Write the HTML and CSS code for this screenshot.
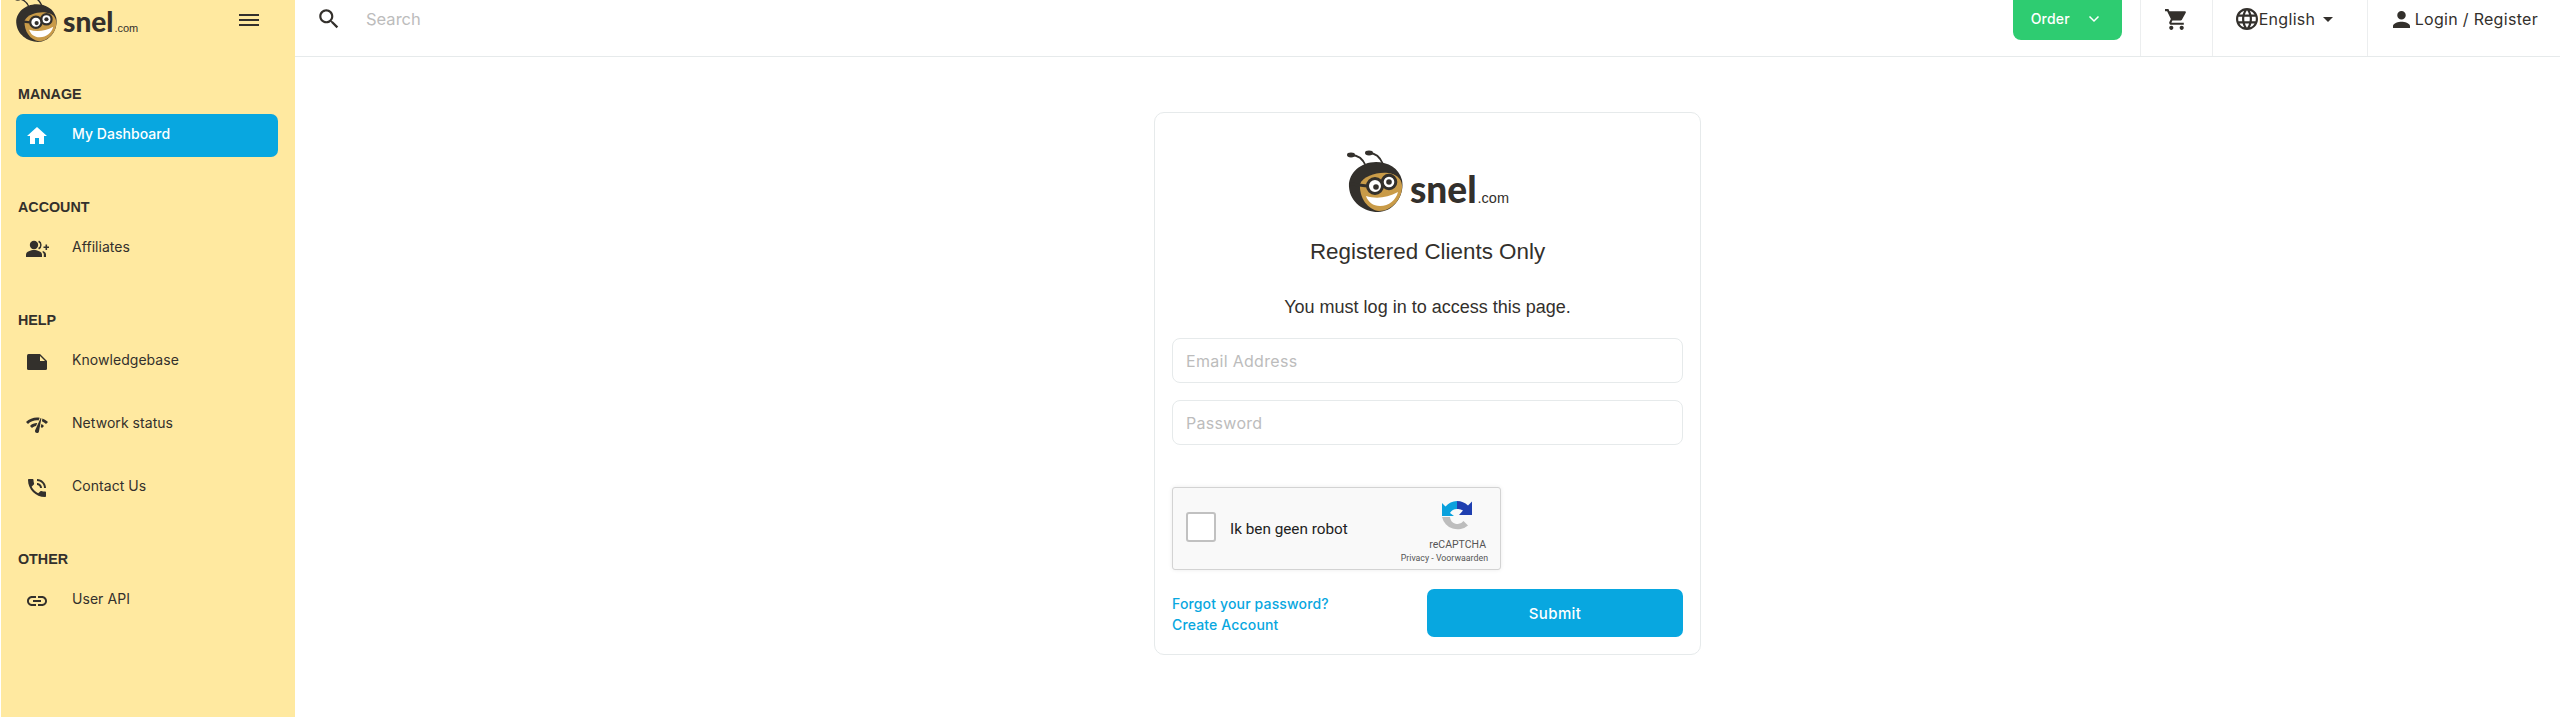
FILE: index.html
```html
<!DOCTYPE html>
<html lang="en">
<head>
<meta charset="utf-8">
<title>Login - snel.com</title>
<link rel="stylesheet" href="styles.css">
</head>
<body>
<svg class="defs" width="0" height="0" aria-hidden="true">
  <symbol id="bee" viewBox="0 0 57 62">
    <path d="M20 16C17 9 12 5 5 5" fill="none" stroke="#33302c" stroke-width="1.800"/>
    <path d="M37 14C34 7 30 3 23 3" fill="none" stroke="#33302c" stroke-width="1.800"/>
    <ellipse cx="5" cy="5" rx="4" ry="2.400" fill="#33302c"/>
    <ellipse cx="23" cy="3" rx="4" ry="2.400" fill="#33302c"/>
    <path d="M3 37C2 24 14 12 30 12 42 12 53 18 56 30 59 45 48 62 32 62 18 62 4 52 3 37Z" fill="#33302c"/>
    <path d="M14 34C18 26 30 22 42 23 50 24 55 28 56 35 57 48 46 61 33 61 22 60 13 48 14 34Z" fill="#c99b48"/>
    <path d="M20 46C30 49 41 48 52 42 50 50 43 56 34 56 27 56 22 52 20 46Z" fill="#fff"/>
    <path d="M21 36l-16-2" stroke="#33302c" stroke-width="3"/>
    <circle cx="29" cy="36" r="7.500" fill="#fff" stroke="#33302c" stroke-width="3"/>
    <circle cx="43" cy="32" r="6.800" fill="#fff" stroke="#33302c" stroke-width="3"/>
    <path d="M36 34l1-1" stroke="#33302c" stroke-width="3"/>
    <circle cx="30" cy="37" r="2.800" fill="#33302c"/>
    <circle cx="43" cy="32" r="2.800" fill="#33302c"/>
  </symbol>
</svg>

<aside class="sidebar">
  <div class="side-head">
    <div class="logo logo-small">
      <svg class="bee"><use href="#bee"/></svg>
      <span class="word">snel</span><span class="dotcom">.com</span>
    </div>
    <button class="burger" aria-label="Menu"><i></i><i></i><i></i></button>
  </div>
  <nav class="nav">
    <section class="group">
      <h3>MANAGE</h3>
      <a class="item active">
        <svg viewBox="0 0 24 24"><path d="M10 20v-6h4v6h5v-8h3L12 3 2 12h3v8z"/></svg>
        <span>My Dashboard</span>
      </a>
    </section>
    <section class="group">
      <h3>ACCOUNT</h3>
      <a class="item">
        <svg viewBox="0 0 24 24"><circle cx="9" cy="8" r="4.200"/><path d="M1 20v-2.500C1 14.500 6 13 9 13s8 1.500 8 4.500V20z"/><path d="M14 3.600a5 5 0 0 1 0 8.800l-.8-1.300a3.400 3.400 0 0 0 0-6.200zM18 14c2 .8 3 2 3 3.500V20h-2.200v-2.500c0-1-.5-2-1.500-2.600zM18.500 9.500h2v-2h1.600v2h1.900v1.600h-1.900v2h-1.600v-2h-2z"/></svg>
        <span>Affiliates</span>
      </a>
    </section>
    <section class="group">
      <h3>HELP</h3>
      <a class="item">
        <svg viewBox="0 0 24 24"><path d="M4 4h11l7 7v7.500a1.500 1.500 0 0 1-1.500 1.500h-17A1.500 1.500 0 0 1 2 18.500v-13A1.500 1.500 0 0 1 3.500 4z"/><path class="fold" d="M15 6l5 5h-5z"/></svg>
        <span>Knowledgebase</span>
      </a>
      <a class="item">
        <svg viewBox="0 0 24 24"><path d="M15.900 5c-.17 0-.32.09-.41.23l-.07.15-5.180 11.650c-.16.29-.26.61-.26.96 0 1.110.9 2.010 2.010 2.010.96 0 1.770-.68 1.960-1.590l.01-.03L16.400 5.500c0-.28-.22-.5-.5-.5zM1 9l2 2c2.880-2.880 6.790-4.080 10.530-3.620l1.190-2.680C9.890 3.840 4.740 5.270 1 9zm20 2l2-2c-1.640-1.640-3.550-2.820-5.590-3.570l-.53 2.820c1.500.62 2.900 1.530 4.120 2.750zm-4 4l2-2c-.8-.8-1.700-1.420-2.660-1.890l-.55 2.920c.42.27.83.59 1.210.97zM5 13l2 2c1.130-1.130 2.560-1.790 4.030-2l1.280-2.880c-2.630-.08-5.300.87-7.310 2.880z"/></svg>
        <span>Network status</span>
      </a>
      <a class="item">
        <svg viewBox="0 0 24 24"><path d="M20 15.500c-1.250 0-2.450-.2-3.570-.57-.35-.11-.74-.03-1.020.24l-2.200 2.200c-2.830-1.440-5.150-3.750-6.590-6.590l2.200-2.210c.28-.26.36-.65.25-1C8.700 6.450 8.500 5.250 8.500 4c0-.55-.45-1-1-1H4c-.55 0-1 .45-1 1 0 9.390 7.610 17 17 17 .55 0 1-.45 1-1v-3.500c0-.55-.45-1-1-1zM19 12h2c0-4.970-4.030-9-9-9v2c3.870 0 7 3.130 7 7zm-4 0h2c0-2.760-2.240-5-5-5v2c1.660 0 3 1.340 3 3z"/></svg>
        <span>Contact Us</span>
      </a>
    </section>
    <section class="group">
      <h3>OTHER</h3>
      <a class="item">
        <svg viewBox="0 0 24 24"><path d="M3.900 12c0-1.710 1.390-3.100 3.100-3.100h4V7H7c-2.760 0-5 2.240-5 5s2.240 5 5 5h4v-1.900H7c-1.710 0-3.100-1.390-3.100-3.100zM8 13h8v-2H8v2zm9-6h-4v1.900h4c1.710 0 3.100 1.390 3.100 3.100s-1.390 3.100-3.100 3.100h-4V17h4c2.760 0 5-2.240 5-5s-2.240-5-5-5z"/></svg>
        <span>User API</span>
      </a>
    </section>
  </nav>
</aside>

<div class="page">
  <header class="topbar">
    <div class="search">
      <svg class="ic-search" viewBox="0 0 24 24"><path d="M15.500 14h-.79l-.28-.27C15.410 12.590 16 11.110 16 9.500 16 5.910 13.090 3 9.500 3S3 5.910 3 9.500 5.910 16 9.500 16c1.610 0 3.090-.59 4.230-1.570l.27.28v.79l5 4.990L20.490 19l-4.990-5zm-6 0C7.010 14 5 11.990 5 9.500S7.010 5 9.500 5 14 7.010 14 9.500 11.990 14 9.500 14z"/></svg>
      <input type="text" placeholder="Search">
    </div>
    <button class="order"><span>Order</span>
      <svg viewBox="0 0 12 12"><path d="M1.500 3.500L6 8l4.500-4.500" fill="none" stroke="#fff" stroke-width="1.500"/></svg>
    </button>
    <a class="cell cart">
      <svg viewBox="0 0 24 24"><path d="M7 18c-1.100 0-1.990.9-1.990 2S5.900 22 7 22s2-.9 2-2-.9-2-2-2zM1 2v2h2l3.600 7.590-1.350 2.450c-.16.28-.25.61-.25.96 0 1.100.9 2 2 2h12v-2H7.420c-.14 0-.25-.11-.25-.25l.03-.12.9-1.630h7.450c.75 0 1.410-.41 1.750-1.030l3.580-6.490c.08-.14.12-.31.12-.48 0-.55-.45-1-1-1H5.210l-.94-2H1zm16 16c-1.100 0-1.990.9-1.990 2s.89 2 1.990 2 2-.9 2-2-.9-2-2-2z"/></svg>
    </a>
    <a class="cell lang">
      <svg class="globe" viewBox="2 2 20 20"><path d="M11.990 2C6.470 2 2 6.480 2 12s4.470 10 9.990 10C17.520 22 22 17.520 22 12S17.520 2 11.990 2zm6.930 6h-2.950c-.32-1.250-.78-2.450-1.380-3.560 1.840.63 3.370 1.910 4.330 3.560zM12 4.040c.83 1.200 1.480 2.530 1.910 3.960h-3.820c.43-1.430 1.080-2.760 1.910-3.960zM4.260 14C4.100 13.360 4 12.690 4 12s.1-1.360.26-2h3.380c-.08.66-.14 1.320-.14 2 0 .68.06 1.340.14 2H4.260zm.82 2h2.950c.32 1.250.78 2.450 1.380 3.560-1.840-.63-3.370-1.900-4.330-3.560zm2.950-8H5.080c.96-1.660 2.490-2.930 4.330-3.560C8.810 5.550 8.350 6.750 8.030 8zM12 19.960c-.83-1.200-1.480-2.530-1.910-3.960h3.820c-.43 1.430-1.080 2.760-1.910 3.960zM14.340 14H9.660c-.09-.66-.16-1.320-.16-2 0-.68.07-1.350.16-2h4.680c.09.65.16 1.320.16 2 0 .68-.07 1.340-.16 2zm.25 5.560c.6-1.110 1.060-2.310 1.380-3.560h2.950c-.96 1.650-2.490 2.930-4.330 3.560zM16.360 14c.08-.66.14-1.320.14-2 0-.68-.06-1.340-.14-2h3.380c.16.64.26 1.310.26 2s-.1 1.360-.26 2h-3.380z"/></svg>
      <span>English</span><i class="caret"></i>
    </a>
    <a class="cell login">
      <svg viewBox="4 4 16 16"><path d="M12 12c2.210 0 4-1.790 4-4s-1.790-4-4-4-4 1.790-4 4 1.790 4 4 4zm0 2c-2.670 0-8 1.340-8 4v2h16v-2c0-2.660-5.330-4-8-4z"/></svg>
      <span>Login / Register</span>
    </a>
  </header>

  <main class="main">
    <form class="card">
      <div class="logo logo-large">
        <svg class="bee"><use href="#bee"/></svg>
        <span class="word">snel</span><span class="dotcom">.com</span>
      </div>
      <h1>Registered Clients Only</h1>
      <p class="intro">You must log in to access this page.</p>
      <input class="field" type="text" placeholder="Email Address">
      <input class="field" type="password" placeholder="Password">
      <div class="captcha">
        <span class="check"></span>
        <span class="robot">Ik ben geen robot</span>
        <div class="brand">
          <svg viewBox="0 0 32 33">
            <path d="M16 1A16 16 0 0 1 27 5.500L31 1.500V15H18L22 10.500A8 8 0 0 0 16 9Z" fill="#1f3fb0"/>
            <path d="M16 1V9A8 8 0 0 0 9 13L13 16H1V3L4.500 6.500A16 16 0 0 1 16 1Z" fill="#0aa1dd"/>
            <path d="M1 17H9A7.500 7.500 0 0 0 22.500 21L27 25.500A16 16 0 0 1 1 17Z" fill="#bdbdbd"/>
          </svg>
          <strong>reCAPTCHA</strong>
          <small>Privacy - Voorwaarden</small>
        </div>
      </div>
      <div class="actions">
        <div class="links">
          <a>Forgot your password?</a>
          <a>Create Account</a>
        </div>
        <button class="submit" type="button">Submit</button>
      </div>
    </form>
  </main>
</div>
</body>
</html>
```

FILE: styles.css
```css
* { box-sizing: border-box; }
html, body { margin: 0; height: 100%; }
body {
  display: flex;
  height: 717px;
  overflow: hidden;
  background: #fff;
  color: #33302c;
  font-family: Inter, "Liberation Sans", sans-serif;
  padding-left: 1px;
}
.defs { position: absolute; }
button, input { font-family: inherit; }

.sidebar {
  width: 294px;
  flex: none;
  background: #ffe9a0;
  overflow: hidden;
}
.side-head {
  height: 56px;
  display: flex;
  align-items: flex-start;
  justify-content: space-between;
  padding: 0 36px 0 13px;
}
.burger {
  width: 20px;
  margin-top: 14px;
  padding: 0;
  border: 0;
  background: none;
  display: flex;
  flex-direction: column;
  gap: 3px;
}
.burger i { display: block; height: 2px; background: #33302c; }

.logo { display: flex; align-items: baseline; color: #33302c; font-family: Lato, sans-serif; }
.bee { flex: none; align-self: flex-start; }
.word { font-weight: 900; }
.dotcom { font-weight: 400; font-family: "Liberation Sans", sans-serif; }
.logo-small { height: 42px; }
.logo-small .bee { width: 43px; height: 47px; margin-top: -5px; }
.logo-small .word { font-size: 28px; margin-left: 6px; line-height: 42px; }
.logo-small .dotcom { font-size: 11px; margin-left: 1px; }
.logo-large { justify-content: center; height: 62px; margin-top: 37px; }
.logo-large .bee { width: 57px; height: 62px; }
.logo-large .word { font-size: 37px; margin-left: 7px; line-height: 78px; }
.logo-large .dotcom { font-size: 14.500px; margin-left: 1px; }

.nav { padding: 0 17px 0 15px; }
.group { margin-top: 28px; }
.group + .group { margin-top: 40px; }
.group h3 {
  margin: 0 0 10px;
  padding-left: 2px;
  font: 700 14.300px/20px "Liberation Sans", sans-serif;
}
.item {
  display: flex;
  align-items: center;
  height: 43px;
  border-radius: 7px;
  padding-left: 9px;
  font-size: 14px;
  letter-spacing: .05px;
  color: #33302c;
}
.item + .item { margin-top: 20px; }
.item svg { width: 24px; height: 24px; fill: #33302c; flex: none; }
.item .fold { fill: #ffe9a0; }
.item span { margin-left: 23px; padding-bottom: 4px; }
.item.active { background: #08a7e0; color: #fff; font-weight: 500; }
.item.active svg { fill: #fff; }

.page { flex: 1; min-width: 0; display: flex; flex-direction: column; }
.topbar {
  height: 57px;
  flex: none;
  display: flex;
  align-items: stretch;
  border-bottom: 1px solid #e6eaeb;
  padding-right: 22px;
}
.search { flex: 1; display: flex; align-items: flex-start; padding: 6px 0 0 21px; }
.ic-search { width: 26px; height: 26px; fill: #33302c; }
.search input {
  flex: 1;
  margin-left: 24px;
  height: 26px;
  border: 0;
  outline: 0;
  padding: 0;
  font-size: 16.500px;
}
input::placeholder { color: #bcbcbc; opacity: 1; }

.order {
  width: 109px;
  height: 40px;
  margin-right: 18px;
  border: 0;
  border-radius: 0 0 8px 8px;
  background: #2ecc71;
  color: #fff;
  font-size: 14px;
  font-weight: 500;
  letter-spacing: .2px;
  display: flex;
  align-items: center;
  padding: 0 0 4px 18px;
}
.order svg { width: 12px; height: 12px; margin: 2px 0 0 18px; }

.cell {
  display: flex;
  align-items: center;
  height: 56px;
  border-left: 1px solid #eceeef;
  padding-bottom: 18px;
  font-size: 16px;
  letter-spacing: .3px;
  color: #33302c;
}
.cell svg { fill: #33302c; flex: none; }
.cart { width: 72px; justify-content: center; }
.cart svg { width: 25px; height: 25px; }
.lang { width: 155px; padding-left: 23px; }
.globe { width: 22px; height: 22px; margin-right: 1px; }
.caret {
  margin-left: 8px;
  border-left: 5px solid transparent;
  border-right: 5px solid transparent;
  border-top: 5px solid #33302c;
}
.login { padding-left: 25px; }
.login svg { width: 17px; height: 17px; margin-right: 5px; }

.main { flex: 1; display: flex; justify-content: center; align-items: flex-start; padding-top: 55px; }
.card {
  width: 547px;
  height: 543px;
  border: 1px solid #e6eaeb;
  border-radius: 10px;
  padding: 0 17px;
  display: flex;
  flex-direction: column;
}
.card h1 {
  margin: 27px 0 0;
  text-align: center;
  font: 400 22.400px/26px "Liberation Sans", sans-serif;
}
.intro {
  margin: 31px 0 0;
  text-align: center;
  font: 400 18px/22px "Liberation Sans", sans-serif;
}
.field {
  height: 45px;
  margin-top: 17px;
  border: 1px solid #e6eaeb;
  border-radius: 8px;
  padding: 0 13px;
  font-size: 16px;
  letter-spacing: .3px;
  outline: 0;
  flex: none;
}
.intro + .field { margin-top: 20px; }
.captcha {
  width: 329px;
  height: 83px;
  margin-top: 42px;
  border: 1px solid #d3d3d3;
  border-radius: 3px;
  background: #f9f9f9;
  box-shadow: 0 0 4px rgba(0,0,0,.08);
  display: flex;
  align-items: center;
  padding-left: 13px;
  font-family: Roboto, sans-serif;
}
.check {
  width: 30px;
  height: 30px;
  margin-bottom: 3px;
  border: 2px solid #c1c1c1;
  border-radius: 3px;
  background: #fff;
  flex: none;
}
.robot { margin-left: 14px; font-size: 15.300px; color: #222; }
.brand {
  margin-left: auto;
  margin-right: 12px;
  display: flex;
  flex-direction: column;
  align-items: flex-end;
  align-self: flex-start;
  padding-top: 12px;
}
.brand svg { width: 32px; height: 33px; margin-right: 15px; }
.brand strong { font-weight: 400; font-size: 10.500px; line-height: 14px; margin: 5px 2px 0 0; color: #555; }
.brand small { font-size: 8.800px; line-height: 12px; color: #555; }

.actions { display: flex; justify-content: space-between; align-items: flex-start; margin-top: 19px; }
.links { display: flex; flex-direction: column; margin-top: 4px; color: #08a7e0; font-size: 14px; letter-spacing: .15px; line-height: 21px; font-weight: 500; }
.submit {
  width: 256px;
  height: 48px;
  border: 0;
  border-radius: 7px;
  background: #08a7e0;
  color: #fff;
  font-size: 15px;
  letter-spacing: .4px;
  font-weight: 500;
}
```
